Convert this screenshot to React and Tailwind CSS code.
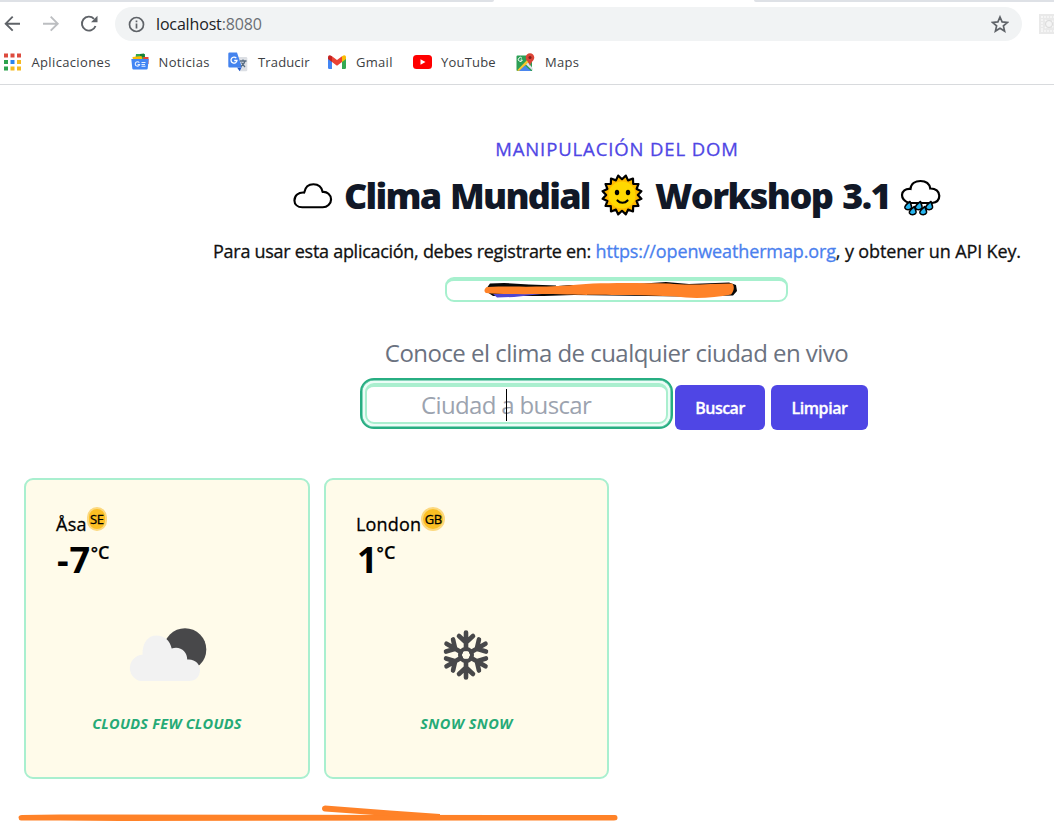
import React from 'react';

const CloudEmoji = () => (
  <svg className="block h-[42px] w-[42px]" viewBox="0 0 42 42" fill="#fff" stroke="#000" strokeWidth="2.2" strokeLinejoin="round">
    <path d="M10.500 32.500C5.800 32.500 2.500 29.600 2.500 25.500C2.500 20.500 6.500 17 12.500 17.500C13.500 12 17 9 22 9C27.500 9 30.500 12.300 31.300 16.800C36 16.300 40 19.800 40 24.500C40 29 36 32.500 31.500 32.500Z" />
  </svg>
);

const sunPoints = Array.from({ length: 32 }, (_, i) => {
  const r = i % 2 ? 15.8 : 19.8;
  const a = ((i + 1) * Math.PI) / 16;
  return `${21 + r * Math.sin(a)},${21 - r * Math.cos(a)}`;
}).join(' ');

const SunEmoji = () => (
  <svg className="block h-[42px] w-[42px]" viewBox="0 0 42 42">
    <polygon points={sunPoints} fill="#ffb900" stroke="#000" strokeWidth="2.2" strokeLinejoin="round" />
    <circle cx="21" cy="21" r="13.500" fill="#ffd800" />
    <ellipse cx="16" cy="18.500" rx="2.200" ry="2.800" />
    <ellipse cx="27" cy="18.500" rx="2.200" ry="2.800" />
    <path d="M16.500 26.500C19 29.500 24 29.500 26.500 26.500" fill="none" stroke="#000" strokeWidth="2.200" strokeLinecap="round" />
  </svg>
);

const Drop = ({ x, y }) => (
  <path d={`M${x + 1.5} ${y - 1.5}C${x - 2} ${y + 1} ${x - 4} ${y + 3} ${x - 3.6} ${y + 5}C${x - 2.4} ${y + 7.4} ${x + 2} ${y + 7.4} ${x + 3} ${y + 4.8}C${x + 3.6} ${y + 3} ${x + 2} ${y + 1.5} ${x + 1.5} ${y - 1.5}Z`} fill="#26b4ee" stroke="#000" strokeWidth="1.600" strokeLinejoin="round" />
);

const RainEmoji = () => (
  <svg className="block h-[42px] w-[42px]" viewBox="0 0 42 42">
    <path d="M9 28C5 26.500 2 24 2 20C2 16 5.500 13.500 10.500 14C11 8.500 15.500 6 20.500 6C26 6 29.500 9 30.300 13.500C35.500 13.300 39.300 16.500 39.300 20.800C39.300 25 36.500 27.500 32 28Z" fill="#fff" stroke="#000" strokeWidth="2.200" />
    <Drop x={8.5} y={28} />
    <Drop x={19} y={28} />
    <Drop x={29.5} y={28} />
    <Drop x={13} y={33} />
    <Drop x={23.5} y={33} />
  </svg>
);

const AppsIcon = () => (
  <svg className="block h-[18px] w-[17px]" viewBox="0 0 17 18">
    {['#dd4b3e', '#dd4b3e', '#dd4b3e', '#2ba24c', '#2a83f0', '#f5b921', '#2ba24c', '#f5b921', '#f5b921'].map((c, i) => (
      <rect key={i} x={(i % 3) * 6.5} y={0.5 + Math.floor(i / 3) * 6.500} width="4" height="4" fill={c} />
    ))}
  </svg>
);

const NewsIcon = () => (
  <svg className="block h-[18px] w-[18px]" viewBox="0 0 18 18">
    <path d="M5 1h9v8H4z" fill="#34a853" />
    <path d="M9 1l4-.5 1 3.500H9z" fill="#188038" />
    <path d="M1.500 4l9-1 1 4-9 2z" fill="#fbbc04" />
    <path d="M12 4h5.500v7h-4z" fill="#ea4335" />
    <path d="M.3 6h17.400l-1 9.500a1.200 1.200 0 0 1-1.200 1H2.500a1.200 1.200 0 0 1-1.200-1z" fill="#4285f4" />
    <path d="M8.300 9.700A2.200 2.200 0 1 0 8.600 11.500H6.600M10.500 9.500h4M10.500 11.500h3.500M10.500 13.300h4" fill="none" stroke="#e6efff" strokeWidth="1.100" />
  </svg>
);

const TranslateIcon = () => (
  <svg className="block h-[20px] w-[20px]" viewBox="0 0 20 20">
    <path d="M8 5h10a1.300 1.300 0 0 1 1.300 1.300V18a1.300 1.300 0 0 1-1.300 1.300h-6z" fill="#dcdfe4" />
    <path d="M9 15.500h4.500l-1.800 3.800z" fill="#2058c9" />
    <path d="M1.500.5h7.500l5 15H1.500A1.200 1.200 0 0 1 .3 14.300V1.700A1.200 1.200 0 0 1 1.500.5z" fill="#4483ee" />
    <path d="M8.300 6.200A3 3 0 1 0 9 8.500H6.200" fill="none" stroke="#fff" strokeWidth="1.300" />
    <path d="M12 9h6.500M15 7.500V9M17 9c-.5 2.500-2 4-4 5.500M13.500 10.500c1 2 2 3 3.500 4.500" fill="none" stroke="#566b81" strokeWidth="1.300" />
  </svg>
);

const GmailIcon = () => (
  <svg className="block h-[14px] w-[18px]" viewBox="0 0 18 14">
    <path d="M0 2.500L4 5v9H1.200A1.200 1.200 0 0 1 0 12.800z" fill="#4285f4" />
    <path d="M18 2.500L14 5v9h2.800a1.200 1.200 0 0 0 1.200-1.200z" fill="#34a853" />
    <path d="M14 1.200L16 .2C17 0 18 .9 18 2.200V4l-4 3z" fill="#fbbc04" />
    <path d="M4 1.200L9 5l5-3.800V7l-5 3.800L4 7z" fill="#ea4335" />
    <path d="M4 1.200L2 .2C1 0 0 .9 0 2.200V4l4 3z" fill="#c5221f" />
  </svg>
);

const YouTubeIcon = () => (
  <svg className="block h-[14px] w-[19px]" viewBox="0 0 19 14">
    <rect width="19" height="14" rx="3.500" fill="#f00" />
    <path d="M7.500 4.200L12.500 7l-5 2.800z" fill="#fff" />
  </svg>
);

const MapsIcon = () => (
  <svg className="block h-[19px] w-[19px]" viewBox="0 0 19 19">
    <path d="M1.500 2.500H12L16 8v10H1.500A1 1 0 0 1 .5 17V3.500A1 1 0 0 1 1.500 2.500z" fill="#2c9f55" />
    <path d="M1 17.500L13 5l2 2L3.500 18z" fill="#fbc52d" />
    <path d="M3 18l6-5.500 6 5.500z" fill="#4a86ee" />
    <path d="M10 11.500L12 9.500l5 6V18z" fill="#dfe3e8" />
    <path d="M6 5.300A2 2 0 1 0 6.300 7H4.600" fill="none" stroke="#fff" strokeWidth="1" />
    <path d="M14 .2a4.300 4.300 0 0 1 4.300 4.300c0 3-3.300 4.300-4.300 8.500-1-4.200-4.300-5.500-4.300-8.500A4.300 4.300 0 0 1 14 .2z" fill="#dc4537" />
    <circle cx="14" cy="4.500" r="1.500" fill="#7c1f1b" />
  </svg>
);

const FewClouds = () => (
  <svg className="block h-[54px] w-[80px]" viewBox="-1 0 80 54">
    <circle cx="57" cy="21.500" r="21.300" fill="#48484a" />
    <path d="M12 53A13.300 13.300 0 0 1 14.500 26.800C14 15 20 7.500 28.500 7.500C36 7.500 42 12.500 43.700 20.500C52 17.500 59.500 23.500 59.200 31.500C66.500 30.500 72.500 36 72 42.500C71.500 49 67.500 53 61 53Z" fill="#f2f2f2" />
  </svg>
);

const Snow = () => (
  <svg className="block h-[50px] w-[48px]" viewBox="-24 -25 48 50" fill="none" stroke="#48484a" strokeWidth="4.600" strokeLinecap="round">
    {[0, 60, 120, 180, 240, 300].map((a) => (
      <path key={a} transform={`rotate(${a})`} d="M0-6V-22.500M0-12.500L-7-19M0-12.500L7-19" />
    ))}
    <circle r="6" strokeWidth="4" />
  </svg>
);

const bookmark = 'flex shrink-0 items-center whitespace-nowrap text-[13px] tracking-[0.15px] text-[#3c4043]';

const Card = ({ width, city, cityClass, country, temp, tempClass, icon, children, labelClass }) => (
  <article className={`flex h-[301px] flex-col rounded-[9px] border-2 border-[#a9efcf] bg-[#fffbea] text-black ${width}`}>
    <div className="mt-[27px] flex h-[28px] pl-[30px]">
      <span className={`mt-[4px] text-[18px] leading-[27px] font-medium [-webkit-text-stroke:0.3px] ${cityClass}`}>{city}</span>
      <span className={`flex h-[24px] items-center justify-center rounded-full border-2 border-[#fcd980] bg-[#fbbf24] pt-[2px] text-[13px] font-medium tracking-[-0.3px] [-webkit-text-stroke:0.3px] ${country === 'SE' ? 'w-[20px]' : 'w-[24px]'}`}>
        {country}
      </span>
    </div>
    <div className="flex h-[50px] items-start pl-[31px]">
      <span className={`text-[36px] leading-[50px] font-bold ${tempClass}`}>{temp}</span>
      <span className="mt-[5px] text-[18px] leading-[24px] font-semibold [-webkit-text-stroke:0.2px]">
        <span className="text-[17px]">°</span>C
      </span>
    </div>
    <div className="mt-[43px] flex h-[54px] items-center justify-center pr-px">{icon}</div>
    <p className={`mt-[32px] text-center text-[14.500px] leading-[20px] font-bold whitespace-nowrap text-[#25aa76] italic ${labelClass}`}>{children}</p>
  </article>
);

export default function App() {
  return (
    <div className="relative h-[824px] w-[1054px] overflow-hidden bg-white font-['Open_Sans','Noto_Sans',sans-serif]">
      <header className="flex h-[85px] flex-col border-b border-[#d8dadd]">
        <div className="flex h-[2px] justify-between">
          <div className="w-[494px] rounded-br-[2px] bg-[#dee1e6]" />
          <div className="w-[300px] rounded-bl-[2px] bg-[#dee1e6]" />
        </div>
        <div className="mt-[5px] flex h-[34px] items-center">
          <svg className="ml-[4px] block h-[18px] w-[94px]" viewBox="0 0 94 18" fill="none" strokeWidth="1.900">
            <path d="M16 8.700H2M8.700 1.700L1.700 8.700L8.700 15.700" stroke="#5f6368" />
            <path d="M39 8.700H53M46.700 1.700L53.700 8.700L46.700 15.700" stroke="#bcbec1" />
            <path d="M91.500 11A7 7 0 1 1 90 3.800" stroke="#5f6368" />
            <path d="M93.500 .8V7.300H87z" fill="#5f6368" />
          </svg>
          <div className="ml-[17px] flex h-[34px] w-[907px] items-center rounded-full bg-[#f1f3f4] pr-[13px] pl-[13px]">
            <svg className="block h-[17px] w-[17px]" viewBox="0 0 17 17" fill="none" stroke="#5f6368" strokeWidth="1.700">
              <circle cx="8.500" cy="8.500" r="7" />
              <path d="M8.500 7.500V12.500M8.500 4.500V6.200" />
            </svg>
            <span className="ml-[11px] text-[16px] tracking-[-0.15px] text-[#202124]">
              localhost<span className="text-[#6b6f74]">:8080</span>
            </span>
            <svg className="ml-auto block h-[18px] w-[18px]" viewBox="0 0 18 18" fill="none" stroke="#5f6368" strokeWidth="1.700">
              <path d="M9 2L11.100 6.900L16.500 7.400L12.400 10.900L13.600 16.100L9 13.300L4.400 16.100L5.600 10.900L1.500 7.400L6.900 6.900Z" />
            </svg>
          </div>
          <svg className="ml-[17px] block h-[20px] w-[15px] shrink-0" viewBox="0 0 15 20">
            <rect width="20" height="20" fill="#e9e9e9" />
            <path d="M2 3h13M2 17h13M3 2v16M6 6l9 8M6 14l9-8" stroke="#f8f8f8" strokeWidth="1.500" strokeDasharray="2 1" />
            <circle cx="10" cy="10" r="3.500" fill="#f4f4f4" stroke="#dadada" />
          </svg>
        </div>
        <nav className="flex h-[42px] items-center pl-[4px]">
          <div className={`${bookmark} w-[127px]`}><AppsIcon /><span className="mt-px ml-[10.500px] tracking-[0.35px]">Aplicaciones</span></div>
          <div className={`${bookmark} w-[97px]`}><NewsIcon /><span className="mt-px ml-[9.500px] tracking-[0.35px]">Noticias</span></div>
          <div className={`${bookmark} w-[100px]`}><TranslateIcon /><span className="mt-px ml-[10px]">Traducir</span></div>
          <div className={`${bookmark} w-[85px]`}><GmailIcon /><span className="mt-px ml-[10px] tracking-[0.3px]">Gmail</span></div>
          <div className={`${bookmark} w-[103px]`}><YouTubeIcon /><span className="mt-px ml-[9px] tracking-[0.2px]">YouTube</span></div>
          <div className={bookmark}><MapsIcon /><span className="mt-px ml-[10px] tracking-[0.3px]">Maps</span></div>
        </nav>
      </header>

      <main className="flex w-[1234px] flex-col items-center">
        <h2 className="mt-[50px] text-[18.500px] leading-[27px] font-medium tracking-[0.88px] whitespace-nowrap text-[#4f46e5] [-webkit-text-stroke:0.3px]">MANIPULACIÓN DEL DOM</h2>
        <h1 className="mt-[10px] flex h-[48px] w-[650px] items-center text-[36px] leading-[48px] font-extrabold whitespace-nowrap text-[#111827]">
          <CloudEmoji />
          <span className="ml-[11px] w-[245px] tracking-[-1.75px] [word-spacing:2px]">Clima Mundial</span>
          <span className="-mt-[2px] ml-[12px]"><SunEmoji /></span>
          <span className="ml-[12px] w-[233px] tracking-[-1.55px] [word-spacing:2px]">Workshop 3.1</span>
          <span className="ml-[12px]"><RainEmoji /></span>
        </h1>
        <p className="mt-[18px] text-[18px] leading-[27px] font-medium tracking-[-0.22px] whitespace-nowrap text-[#111] [-webkit-text-stroke:0.3px]">
          <span className="tracking-[-0.28px]">Para usar esta aplicación, debes registrarte en: </span><a className="tracking-[-0.13px] text-[#4a80ee]">https://openweathermap.org</a><span className="tracking-[-0.13px]">, y obtener un API Key.</span>
        </p>
        <div className="mt-[12px] mr-[2px] h-[25px] w-[343px] rounded-[9px] border-2 border-t-[4px] border-[#a7f0ce]">
          <svg className="ml-[37px] block h-[19px] w-[260px]" viewBox="0 0 260 19">
            <path d="M6 2.500L20 2 45 3.500 72 4.500 72 8 18 9 2 8Z" fill="#080808" />
            <path d="M86 4L120 4.500 160 2.500 182 1 205 3 245 1.500 252 4 253 10 249 14.500 200 15.500 90 14 60 15 9 15 3 11Z" fill="#080808" />
            <path d="M9 13L58 13 30 16 13 16.500Z" fill="#4f46cf" />
            <path d="M3 6C28 5 55 6.500 84 4.500C105 1.500 145 1.500 185 2.500C202 4.500 225 3 248 2.500C251 5 250 10 247 13.500C230 17 209 18 192 15.500C160 13.500 110 14.500 83 13.500C55 12.500 25 14 2 12C-1 10 1 7 3 6Z" fill="#ff8228" />
          </svg>
        </div>
        <p className="mt-[35px] mr-px text-[24px] leading-[32px] tracking-[-0.53px] whitespace-nowrap text-[#6b7280]">Conoce el clima de cualquier ciudad en vivo</p>
        <div className="mt-[9px] flex h-[51px] w-[514px]">
          <div className="relative h-[51px] w-[313px] shrink-0 rounded-[14px] border-2 border-[#27ae82] bg-[#ecfdf7] p-[3px] ring-[0.5px] ring-[#27ae82] ring-inset">
            <div className="h-[41px] rounded-[9px] border-2 border-t-[4px] border-[#aaefcf] bg-white pl-[54px] text-[24px] leading-[36px] tracking-[-0.65px] whitespace-nowrap text-[#9ca3af]">Ciudad a buscar</div>
            <i className="absolute top-[9px] left-[144px] h-[32px] w-px bg-black" />
          </div>
          <button className="mt-[7px] ml-[2px] h-[45px] w-[90px] shrink-0 rounded-[6px] bg-[#4f46e5] text-[16px] font-semibold tracking-[-0.5px] text-white [-webkit-text-stroke:0.3px]">Buscar</button>
          <button className="mt-[7px] ml-[6px] h-[45px] w-[97px] shrink-0 rounded-[6px] bg-[#4f46e5] text-[16px] font-semibold tracking-[-0.4px] text-white [-webkit-text-stroke:0.3px]">Limpiar</button>
        </div>
        <section className="mt-[49px] flex gap-[14px] self-start pl-[24px]">
          <Card width="w-[286px]" city="Åsa" cityClass="tracking-[0.3px]" country="SE" temp="-7" tempClass="tracking-[0.8px]" icon={<FewClouds />} labelClass="tracking-[0.27px]">CLOUDS FEW CLOUDS</Card>
          <Card width="w-[285px]" city="London" cityClass="tracking-[0.2px]" country="GB" temp="1" tempClass="tracking-[-1px]" icon={<Snow />} labelClass="tracking-[0.5px]">SNOW SNOW</Card>
        </section>
      </main>

      <svg className="absolute bottom-0 left-0 block h-[24px] w-[640px]" viewBox="0 0 640 24">
        <path d="M18.500 17.500Q18.500 15 22 15L60 14.500H100L615 15Q617.500 15 617.500 18Q617.500 20.500 614 20.500L120 21 60 20.500 21 20.500Q18.500 20 18.500 17.500Z" fill="#ff8228" />
        <path d="M325 5.500Q322 6 322 8.500Q322 11 325 11.500L395 16.500L440 15.500V14L390 10.500Z" fill="#ff8228" />
      </svg>
    </div>
  );
}
